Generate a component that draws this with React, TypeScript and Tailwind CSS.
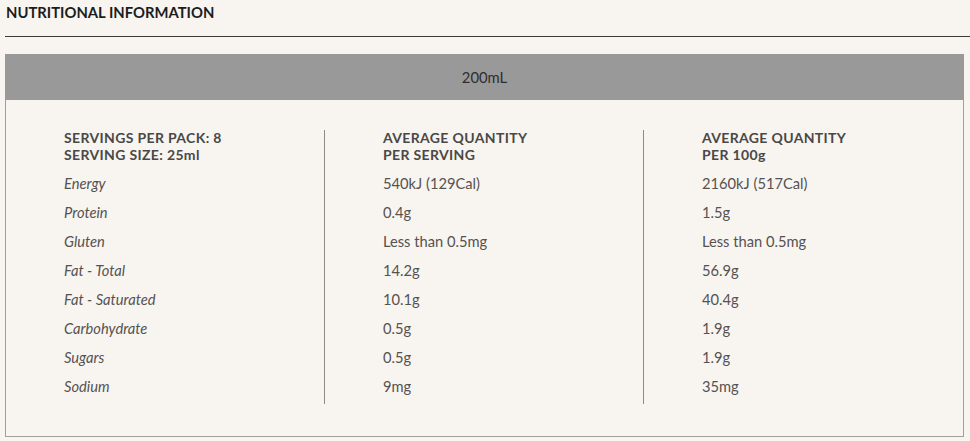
const rows: [string, string, string][] = [
  ["Energy", "540kJ (129Cal)", "2160kJ (517Cal)"],
  ["Protein", "0.4g", "1.5g"],
  ["Gluten", "Less than 0.5mg", "Less than 0.5mg"],
  ["Fat - Total", "14.2g", "56.9g"],
  ["Fat - Saturated", "10.1g", "40.4g"],
  ["Carbohydrate", "0.5g", "1.9g"],
  ["Sugars", "0.5g", "1.9g"],
  ["Sodium", "9mg", "35mg"],
];

function Column({
  head,
  values,
  italic,
  divider,
}: {
  head: [string, string];
  values: string[];
  italic?: boolean;
  divider?: boolean;
}) {
  return (
    <div className={`w-1/3 pl-[58px] pb-[3px] ${divider ? "border-r border-[#8a8a8a]" : ""}`}>
      <div className="text-[14px] tracking-[0.025em] leading-[17px] font-bold text-[#4a4846] mb-[6px] -mt-[1px]">
        <div>{head[0]}</div>
        <div>{head[1]}</div>
      </div>
      {values.map((v, i) => (
        <div
          key={i}
          className={`h-[29px] leading-[29px] text-[14.7px] text-[#555250] ${italic ? "italic" : ""}`}
        >
          {v}
        </div>
      ))}
    </div>
  );
}

export default function App() {
  return (
    <div
      className="w-[970px] h-[441px] bg-[#f8f5f1] overflow-hidden"
      style={{ fontFamily: "Lato, 'Open Sans', sans-serif" }}
    >
      <div className="pl-[6px] pt-[2px] h-[24px] leading-[20px] text-[14.8px] font-bold text-[#1c1c1c]">
        NUTRITIONAL INFORMATION
      </div>
      <div className="ml-[5px] mt-[12px] border-t border-[#3a3a3a]" />
      <div className="ml-[5px] mr-[6px] mt-[17px]">
        <div className="h-[46px] bg-[#999999] flex items-center justify-center text-[14.8px] text-[#2e2e2e]">
          200mL
        </div>
        <div className="border-x border-b border-[#a29e9a] pt-[30px] pb-[32px] flex">
          <Column
            head={["SERVINGS PER PACK: 8", "SERVING SIZE: 25ml"]}
            values={rows.map((r) => r[0])}
            italic
            divider
          />
          <Column
            head={["AVERAGE QUANTITY", "PER SERVING"]}
            values={rows.map((r) => r[1])}
            divider
          />
          <Column head={["AVERAGE QUANTITY", "PER 100g"]} values={rows.map((r) => r[2])} />
        </div>
      </div>
    </div>
  );
}
